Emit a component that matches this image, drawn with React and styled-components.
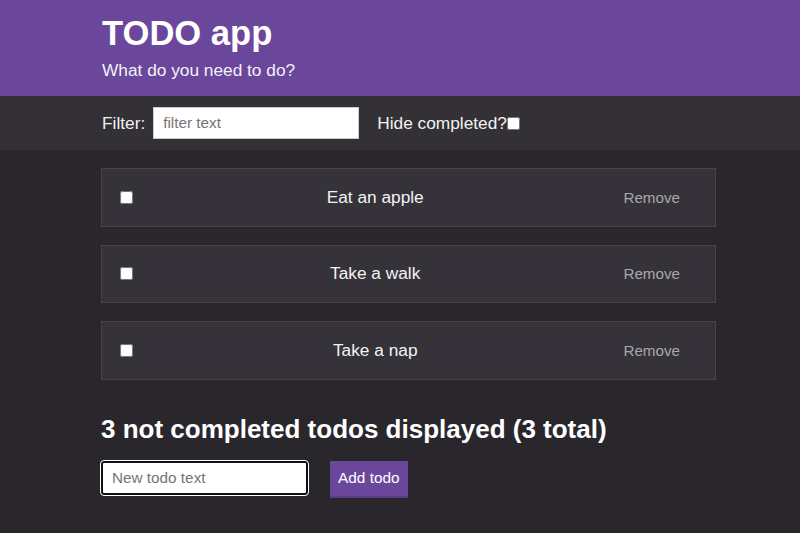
import React, { useState } from 'react';
import styled, { createGlobalStyle } from 'styled-components';

const GlobalStyle = createGlobalStyle`
  body {
    margin: 0;
    background-color: #2a272c;
    font-family: "Liberation Sans", Arial, sans-serif;
    font-size: 17.3px;
    color: #f2f2f2;
  }
`;

const Header = styled.header`
  background-color: #6b479c;
  padding: 14px 0 15px 102px;
`;

const Title = styled.h1`
  margin: 0;
  font-size: 34.6px;
  line-height: 39px;
  font-weight: 700;
  color: #fff;
`;

const Subtitle = styled.div`
  margin-top: 6px;
  font-size: 17.3px;
  line-height: 22px;
  color: #f4f0f8;
`;

const FilterBar = styled.div`
  background-color: #333036;
  height: 54px;
  padding-left: 102px;
  display: flex;
  align-items: center;
  > label {
    font-size: 17.3px;
  }
`;

const FilterInput = styled.input`
  width: 206px;
  height: 32px;
  box-sizing: border-box;
  margin: 0 18px 0 8px;
  padding: 0 9px;
  border: 1px solid #ccc;
  font-family: inherit;
  font-size: 15.3px;
  ::placeholder {
    color: #8a8a8a;
  }
`;

const Checkbox = styled.input`
  width: 13px;
  height: 13px;
  margin: 0;
  accent-color: #6b479c;
`;

const Main = styled.main`
  width: 615px;
  margin-left: 101px;
  padding-top: 18px;
`;

const TodoList = styled.ul`
  list-style: none;
  margin: 0;
  padding: 0;
  display: flex;
  flex-direction: column;
  gap: 18px;
`;

const TodoItem = styled.li`
  height: 58.5px;
  box-sizing: border-box;
  display: flex;
  align-items: center;
  padding: 0 21px 0 18px;
  background-color: #353239;
  border: 1px solid #45424a;
`;

const TodoText = styled.span`
  flex: 1;
  padding-left: 8px;
  text-align: center;
  font-size: 17.3px;
  color: #f2f2f2;
  text-decoration: ${(p) => (p.$done ? 'line-through' : 'none')};
`;

const RemoveButton = styled.button`
  background: none;
  border: none;
  padding: 0 14px;
  font-family: inherit;
  font-size: 15.2px;
  color: #a9a7ab;
  cursor: pointer;
`;

const Summary = styled.h2`
  margin: 34px 0 0;
  font-size: 26px;
  line-height: 30px;
  font-weight: 700;
  color: #fff;
`;

const AddForm = styled.form`
  display: flex;
  gap: 22px;
  margin-top: 17px;
`;

const NewTodoInput = styled.input`
  width: 207px;
  height: 34px;
  box-sizing: border-box;
  padding: 0 9px;
  border: 2px solid #101010;
  border-radius: 3px;
  outline: 1px solid #fff;
  font-family: inherit;
  font-size: 15.3px;
  ::placeholder {
    color: #7a7a7a;
  }
`;

const AddButton = styled.button`
  height: 37px;
  padding: 0 8px;
  background-color: #6b479c;
  border: none;
  border-bottom: 2px solid #5a3b86;
  color: #fff;
  font-family: inherit;
  font-size: 15.4px;
  cursor: pointer;
`;

const initialTodos = [
  { id: 1, text: 'Eat an apple', done: false },
  { id: 2, text: 'Take a walk', done: false },
  { id: 3, text: 'Take a nap', done: false },
];

export default function App() {
  const [todos, setTodos] = useState(initialTodos);
  const [filter, setFilter] = useState('');
  const [hideDone, setHideDone] = useState(false);
  const [text, setText] = useState('');

  const shown = todos.filter(
    (t) =>
      t.text.toLowerCase().includes(filter.toLowerCase()) &&
      !(hideDone && t.done)
  );
  const open = shown.filter((t) => !t.done).length;

  const toggle = (id) =>
    setTodos(todos.map((t) => (t.id === id ? { ...t, done: !t.done } : t)));

  const add = (e) => {
    e.preventDefault();
    if (!text.trim()) return;
    setTodos([...todos, { id: Date.now(), text, done: false }]);
    setText('');
  };

  return (
    <>
      <GlobalStyle />
      <Header>
        <Title>TODO app</Title>
        <Subtitle>What do you need to do?</Subtitle>
      </Header>
      <FilterBar>
        <label htmlFor="filter">Filter:</label>
        <FilterInput
          id="filter"
          placeholder="filter text"
          value={filter}
          onChange={(e) => setFilter(e.target.value)}
        />
        <label htmlFor="hide">Hide completed?</label>
        <Checkbox
          id="hide"
          type="checkbox"
          checked={hideDone}
          onChange={() => setHideDone(!hideDone)}
        />
      </FilterBar>
      <Main>
        <TodoList>
          {shown.map((t) => (
            <TodoItem key={t.id}>
              <Checkbox type="checkbox" checked={t.done} onChange={() => toggle(t.id)} />
              <TodoText $done={t.done}>{t.text}</TodoText>
              <RemoveButton
                type="button"
                onClick={() => setTodos(todos.filter((x) => x.id !== t.id))}
              >
                Remove
              </RemoveButton>
            </TodoItem>
          ))}
        </TodoList>
        <Summary>
          {open} not completed todos displayed ({todos.length} total)
        </Summary>
        <AddForm onSubmit={add}>
          <NewTodoInput
            placeholder="New todo text"
            value={text}
            onChange={(e) => setText(e.target.value)}
          />
          <AddButton type="submit">Add todo</AddButton>
        </AddForm>
      </Main>
    </>
  );
}
